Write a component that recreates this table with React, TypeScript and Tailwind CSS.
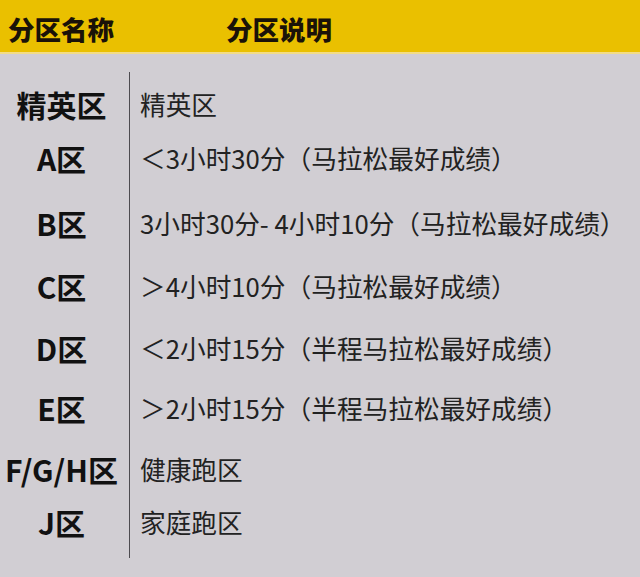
import React from "react";

const font = { fontFamily: '"Noto Sans CJK SC", "Noto Sans", sans-serif' };

const rows = [
  { name: "精英区", desc: "精英区", h: "h-[59px]", pad: "pt-[5px]" },
  { name: "A区", desc: "＜3小时30分（马拉松最好成绩）", h: "h-[60px]", pad: "pb-[6px]" },
  { name: "B区", desc: "3小时30分- 4小时10分（马拉松最好成绩）", h: "h-[64px]", pad: "" },
  { name: "C区", desc: "＞4小时10分（马拉松最好成绩）", h: "h-[62px]", pad: "" },
  { name: "D区", desc: "＜2小时15分（半程马拉松最好成绩）", h: "h-[61px]", pad: "" },
  { name: "E区", desc: "＞2小时15分（半程马拉松最好成绩）", h: "h-[60px]", pad: "" },
  { name: "F/G/H区", desc: "健康跑区", h: "h-[58px]", pad: "pt-[4px]" },
  { name: "J区", desc: "家庭跑区", h: "h-[62px]", pad: "pb-[10px]" },
];

export default function App() {
  return (
    <div className="w-[640px] h-[577px] bg-[#d1ced3] overflow-hidden" style={font}>
      <div className="h-[54px] bg-[#eac000] border-b-2 border-[#f2dc86] flex items-center pt-[6px]">
        <div className="w-[226px] pl-[8px] text-[26.5px] font-black text-[#1a1208] leading-none">
          分区名称
        </div>
        <div className="text-[26.5px] font-black text-[#1a1208] leading-none">分区说明</div>
      </div>
      <div className="mt-[18px]">
        {rows.map((r) => (
          <div key={r.name} className={`flex ${r.h}`}>
            <div
              className={`w-[130px] shrink-0 border-r-[1.5px] border-[#4d4b50] flex items-center justify-center pr-[6px] text-[30px] font-bold text-[#111] leading-none whitespace-nowrap ${r.pad}`}
            >
              {r.name}
            </div>
            <div
              className={`flex items-center pl-[10px] text-[25.7px] text-[#222] leading-none whitespace-nowrap ${r.pad}`}
            >
              {r.desc}
            </div>
          </div>
        ))}
      </div>
    </div>
  );
}
